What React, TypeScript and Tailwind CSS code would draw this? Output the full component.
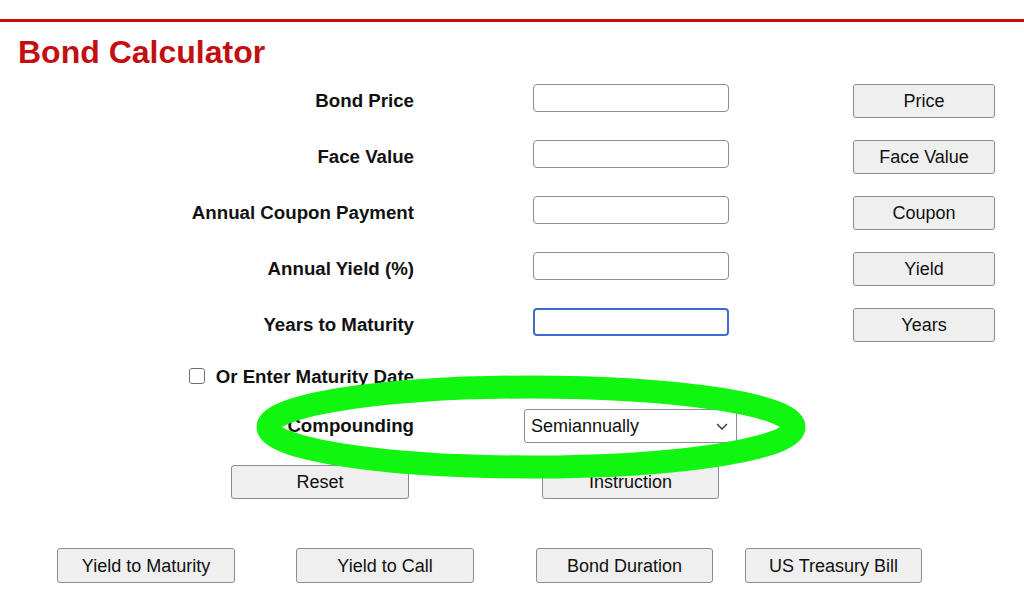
import React from "react";

const btn =
  "h-[34px] bg-[#efefef] border border-[#8c8c8c] rounded-[3px] text-[18px] text-[#111] flex items-center justify-center leading-none";
const inputCls =
  "w-[196px] h-[28px] bg-white border border-[#8e8e8e] rounded-[4px]";
const labelCls =
  "w-[414px] shrink-0 text-right font-bold text-[18.7px] leading-[34px] text-[#111]";

function Row({ label, btnText, focused }: { label: string; btnText: string; focused?: boolean }) {
  return (
    <div className="flex items-start h-[34px]">
      <div className={labelCls}>{label}</div>
      <div
        className={
          focused
            ? "ml-[119px] w-[196px] h-[28px] bg-white border-2 border-[#3f6ccc] rounded-[4px]"
            : "ml-[119px] " + inputCls
        }
      />
      <button className={"ml-[124px] w-[142px] " + btn}>{btnText}</button>
    </div>
  );
}

export default function App() {
  return (
    <div
      className="relative w-full h-[614px] bg-white overflow-hidden"
      style={{ fontFamily: '"Liberation Sans", Arial, Helvetica, sans-serif' }}
    >
      <div className="pt-[19px]">
        <div className="h-[3px] bg-[#c40f12]" />
      </div>
      <h1 className="ml-[18px] mt-[14px] text-[32px] leading-[32px] font-bold text-[#c40f12]">
        Bond Calculator
      </h1>

      <div className="mt-[16px] flex flex-col gap-[22px]">
        <Row label="Bond Price" btnText="Price" />
        <Row label="Face Value" btnText="Face Value" />
        <Row label="Annual Coupon Payment" btnText="Coupon" />
        <Row label="Annual Yield (%)" btnText="Yield" />
        <Row label="Years to Maturity" btnText="Years" focused />
      </div>

      <div className="mt-[24px] flex h-[20px] items-center">
        <div className="w-[414px] flex justify-end items-center gap-[11px]">
          <input
            type="checkbox"
            className="appearance-none w-[16px] h-[16px] border border-[#707070] rounded-[3px] bg-white"
          />
          <span className="font-bold text-[18.7px] leading-[20px] text-[#111] translate-y-[1px]">
            Or Enter Maturity Date
          </span>
        </div>
      </div>

      <div className="mt-[23px] flex items-start h-[34px]">
        <div className={labelCls}>Compounding</div>
        <div className="ml-[110px] w-[213px] h-[34px] bg-white border border-[#8e8e8e] rounded-[3px] flex items-center justify-between pl-[6px] pr-[8px]">
          <span className="text-[18px] text-[#111]">Semiannually</span>
          <svg width="12" height="7" viewBox="0 0 12 7" fill="none">
            <polyline points="1,1 6,6 11,1" stroke="#333" strokeWidth="1.3" />
          </svg>
        </div>
      </div>

      <div className="mt-[22px] flex">
        <button className={"ml-[231px] w-[178px] " + btn}>Reset</button>
        <button className={"ml-[133px] w-[177px] " + btn}>Instruction</button>
      </div>

      <div className="mt-[49px] flex">
        <button className={"ml-[57px] w-[178px] h-[35px] " + btn}>Yield to Maturity</button>
        <button className={"ml-[61px] w-[178px] h-[35px] " + btn}>Yield to Call</button>
        <button className={"ml-[62px] w-[177px] h-[35px] " + btn}>Bond Duration</button>
        <button className={"ml-[32px] w-[177px] h-[35px] " + btn}>US Treasury Bill</button>
      </div>

      <svg
        className="absolute inset-0 pointer-events-none"
        width="1024"
        height="614"
        viewBox="0 0 1024 614"
      >
        <ellipse cx="531" cy="427" rx="263" ry="40" fill="none" stroke="#10f610" strokeWidth="23" />
      </svg>
    </div>
  );
}
